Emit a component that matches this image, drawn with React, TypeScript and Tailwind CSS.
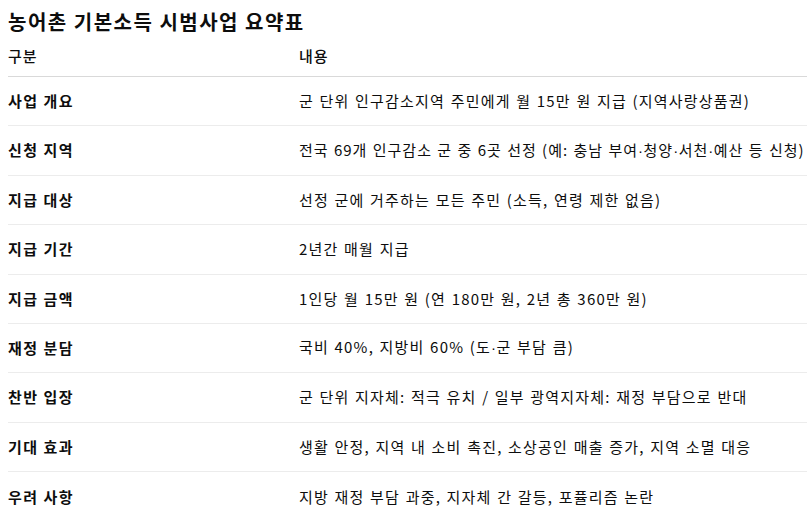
import React from "react";

const rows: [string, string, string][] = [
  ["사업 개요", "군 단위 인구감소지역 주민에게 월 15만 원 지급 (지역사랑상품권)", "tracking-[1.2px]"],
  ["신청 지역", "전국 69개 인구감소 군 중 6곳 선정 (예: 충남 부여·청양·서천·예산 등 신청)", "tracking-[1px]"],
  ["지급 대상", "선정 군에 거주하는 모든 주민 (소득, 연령 제한 없음)", "tracking-[1.2px]"],
  ["지급 기간", "2년간 매월 지급", "tracking-[1.2px]"],
  ["지급 금액", "1인당 월 15만 원 (연 180만 원, 2년 총 360만 원)", "tracking-[1.2px]"],
  ["재정 분담", "국비 40%, 지방비 60% (도·군 부담 큼)", "tracking-[1.2px]"],
  ["찬반 입장", "군 단위 지자체: 적극 유치 / 일부 광역지자체: 재정 부담으로 반대", "tracking-[1.2px]"],
  ["기대 효과", "생활 안정, 지역 내 소비 촉진, 소상공인 매출 증가, 지역 소멸 대응", "tracking-[1.2px]"],
  ["우려 사항", "지방 재정 부담 과중, 지자체 간 갈등, 포퓰리즘 논란", "tracking-[1.2px]"],
];

function Content({ text }: { text: string }) {
  const parts = text.split("·");
  return (
    <>
      {parts.map((p, i) => (
        <React.Fragment key={i}>
          {i > 0 && (
            <span className="tracking-[0.5px]" style={{ fontFamily: '"Liberation Sans", sans-serif' }}>
              ·
            </span>
          )}
          {p}
        </React.Fragment>
      ))}
    </>
  );
}

export default function App() {
  return (
    <div
      className="w-[807px] h-[516px] overflow-hidden bg-white text-[#0d0d0d]"
      style={{ fontFamily: '"Noto Sans CJK KR", "Noto Sans", sans-serif' }}
    >
      <h1 className="pl-2 pt-[7px] text-[20px] font-bold leading-[30px] tracking-[1.5px]">농어촌 기본소득 시범사업 요약표</h1>
      <div className="ml-2 w-[900px] mt-[9px]">
        <div className="flex h-[31px] items-start border-b border-[#d9d9d9] text-[15px] font-medium tracking-[1px]">
          <div className="w-[291px] shrink-0 leading-[20px]">구분</div>
          <div className="leading-[20px]">내용</div>
        </div>
        {rows.map(([a, b, t], i) => (
          <div
            key={a}
            className={`flex h-[49.4px] items-center text-[15px] ${i < rows.length - 1 ? "border-b border-[#ececec]" : ""}`}
          >
            <div className="w-[291px] shrink-0 font-bold tracking-[1.5px]">{a}</div>
            <div className={`whitespace-nowrap [word-spacing:1px] ${t}`}>
              <Content text={b} />
            </div>
          </div>
        ))}
      </div>
    </div>
  );
}
